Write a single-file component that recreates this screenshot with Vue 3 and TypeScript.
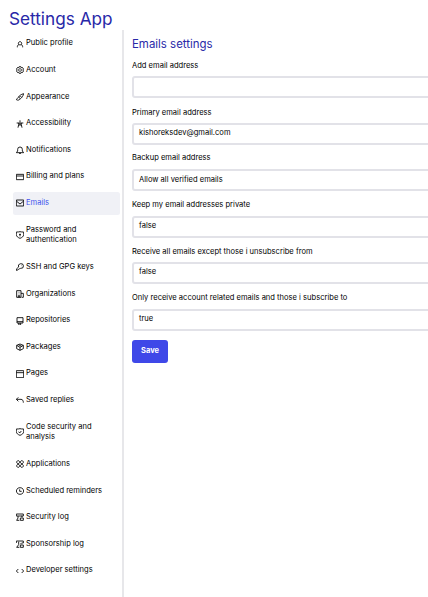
<script setup lang="ts">
interface NavItem {
  label: string
  icon: string
  active?: boolean
}

interface Field {
  label: string
  value: string
  raised?: boolean
  tight?: boolean
}

const items: NavItem[] = [
  { label: 'Public profile', icon: 'M12 5a5 5 0 1 0 .1 0M4 22v-2c0-4 3-6 5-6M20 22v-2c0-4-3-6-5-6' },
  { label: 'Account', icon: 'M9.500 2h5l1 3 4-.5 3 4.500-2 3 2 3-3 4.500-4-.5-1 3h-5l-1-3-4 .5-3-4.500 2-3-2-3 3-4.500 4 .5zM12 8a4 4 0 1 0 .1 0' },
  { label: 'Appearance', icon: 'M23 2C15 4 10 8 8 12l5 5c5-3 8-8 10-15zM8 13c-4 0-4 5-7 7 4 3 11 1 11-3M12 8l5 5' },
  { label: 'Accessibility', icon: 'M12 1v6M2 9h20M8 9v5L6 23M16 9v5l2 9M8 15h8M12 9v6' },
  { label: 'Notifications', icon: 'M1 20h22l-4-5V10a7 7 0 0 0-14 0v5zM9 22h6' },
  { label: 'Billing and plans', icon: 'M1 4h22v16H1zM1 9h22' },
  { label: 'Emails', icon: 'M1 3h22v18H1zM2 7l10 8 10-8', active: true },
  { label: 'Password and authentication', icon: 'M12 2c3 1 7 1 11 1v8c0 5-5 9-11 11C6 20 1 16 1 11V3c4 0 8 0 11-1zM12 9v7M9 10h6' },
  { label: 'SSH and GPG keys', icon: 'M8 12a7.500 7 0 1 1 6 4l-3 1-3 2-3 1-1 2H1v-4zM16 8h1' },
  { label: 'Organizations', icon: 'M2 2h13v20H2zM15 10h7v12h-5M6 7h1M10 7h1M6 12h1M10 12h1M7 22v-5h4v5' },
  { label: 'Repositories', icon: 'M3 2h18v16H3zM3 14h18M8 18v5l3-2 3 2v-5' },
  { label: 'Packages', icon: 'M12 3l10 4v10l-10 5-10-5V7zM2 7l10 6 10-6M12 13v9M7 5l10 5' },
  { label: 'Pages', icon: 'M1 2h22v21H1zM1 8h22' },
  { label: 'Saved replies', icon: 'M7 4L1 10l6 6M1 10h14c5 0 7 4 7 10' },
  { label: 'Code security and analysis', icon: 'M12 2c3 1 7 1 11 1v8c0 5-5 9-11 11C6 20 1 16 1 11V3c4 0 8 0 11-1zM8 11l3 4 5-6' },
  { label: 'Applications', icon: 'M6.500 2a4.500 4.500 0 1 0 .1 0M17.500 2a4.500 4.500 0 1 0 .1 0M6.500 13a4.500 4.500 0 1 0 .1 0M17.500 13a4.500 4.500 0 1 0 .1 0' },
  { label: 'Scheduled reminders', icon: 'M12 2a11 10 0 1 0 .1 0M11 7v6h6' },
  { label: 'Security log', icon: 'M1 9V3h21v6h-5M1 9h17v4M6 9v6l-4 7h8M13 15h9v7h-9z' },
  { label: 'Sponsorship log', icon: 'M1 9V3h21v6h-5M8 5v9l-6 8h8M15 9v4M13 15h9v7h-9z' },
  { label: 'Developer settings', icon: 'M7 6l-6 6 6 6M17 6l6 6-6 6' },
]

const fields: Field[] = [
  { label: 'Add email address', value: '' },
  { label: 'Primary email address', value: 'kishoreksdev@gmail.com', raised: true },
  { label: 'Backup email address', value: 'Allow all verified emails', tight: true },
  { label: 'Keep my email addresses private', value: 'false', raised: true, tight: true },
  { label: 'Receive all emails except those i unsubscribe from', value: 'false', raised: true },
  { label: 'Only receive account related emails and those i subscribe to', value: 'true', raised: true, tight: true },
]
</script>

<template>
  <div class="page">
    <h1 class="title">Settings App</h1>
    <div class="layout">
      <nav class="sidebar">
        <a v-for="item in items" :key="item.label" class="item" :class="{ active: item.active }">
          <svg class="icon" viewBox="0 0 24 24" aria-hidden="true"><path :d="item.icon" /></svg>
          <span class="text">{{ item.label }}</span>
        </a>
      </nav>
      <main class="content">
        <h2 class="heading">Emails settings</h2>
        <div v-for="field in fields" :key="field.label" class="field">
          <span class="label" :class="{ tight: field.tight }">{{ field.label }}</span>
          <div class="input" :class="{ raised: field.raised }">{{ field.value }}</div>
        </div>
        <button class="save" type="button">Save</button>
      </main>
    </div>
  </div>
</template>

<style>
body {
  background: #fff;
  overflow: hidden;
}
</style>

<style scoped>
.page {
  box-sizing: border-box;
  width: 428px;
  height: 597px;
  overflow: hidden;
  font-family: Inter, "Liberation Sans", sans-serif;
  font-size: 7.57px;
  color: #000;
}
.title {
  margin: 0;
  height: 30px;
  box-sizing: border-box;
  padding: 8px 0 0 9px;
  font-size: 17.2px;
  line-height: 22px;
  font-weight: 400;
  color: #2828a8;
}
.layout {
  display: flex;
  height: 567px;
}
.sidebar {
  box-sizing: border-box;
  width: 124px;
  flex: none;
  display: flex;
  flex-direction: column;
  gap: 4px;
  padding: 2.45px 2.5px 0 13px;
  border-right: 2px solid #e7e7ea;
}
.item {
  display: flex;
  align-items: center;
  gap: 2px;
  padding: 5.975px 3px;
  border-radius: 2.5px;
  line-height: 10.67px;
}
.active {
  background: #f0f1f6;
}
.active .text {
  color: #3f51ed;
}
.text {
  max-width: 80px;
}
.icon {
  width: 8px;
  height: 8px;
  flex: none;
  fill: none;
  stroke: #000;
  stroke-width: 2.6;
}
.content {
  width: 330px;
  flex: none;
  padding: 7px 0 0 8px;
}
.heading {
  margin: 0 0 8px;
  font-size: 11.45px;
  line-height: 15px;
  font-weight: 400;
  color: #2828a8;
}
.field {
  height: 46.5px;
}
.label {
  display: block;
  height: 16.3px;
  line-height: 11px;
}
.tight {
  line-height: 10.5px;
}
.input {
  box-sizing: border-box;
  height: 22px;
  padding: 0 5px;
  border: 2px solid #e2e2e8;
  border-radius: 3px;
  line-height: 18px;
}
.raised {
  line-height: 15.300px;
}
.save {
  display: block;
  width: 36px;
  height: 23px;
  margin: 1px 0 0;
  padding: 0 0 1px;
  border: 0;
  border-radius: 3px;
  background: #3f48e8;
  color: #fff;
  font: 700 7.5px/22px Inter, sans-serif;
}
</style>
